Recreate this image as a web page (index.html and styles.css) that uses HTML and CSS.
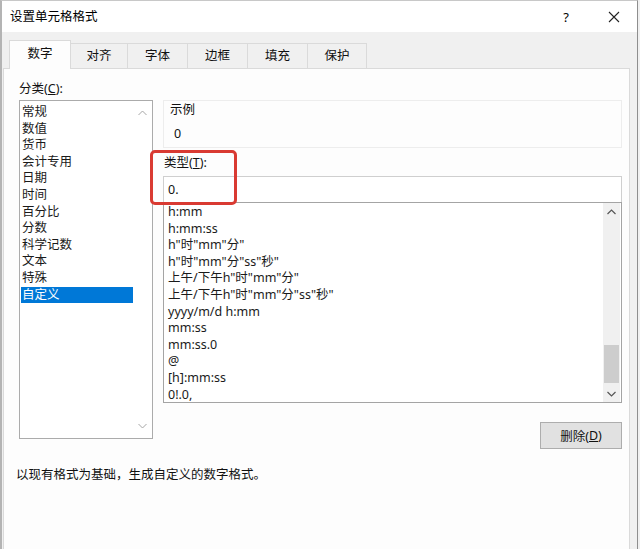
FILE: index.html
```html
<!DOCTYPE html>
<html lang="zh-CN">
<head>
<meta charset="utf-8">
<title>设置单元格格式</title>
<link rel="stylesheet" href="styles.css">
</head>
<body>
<div class="window">
  <div class="titlebar">
    <span class="title">设置单元格格式</span>
    <span class="tbtn help">?</span>
    <span class="tbtn close"><svg width="12" height="12" viewBox="0 0 12 12"><path d="M1 1 L11 11 M11 1 L1 11" stroke="#222" stroke-width="1.1" fill="none"/></svg></span>
  </div>
  <div class="tabs">
    <div class="tab active">数字</div>
    <div class="tab narrow">对齐</div>
    <div class="tab">字体</div>
    <div class="tab">边框</div>
    <div class="tab">填充</div>
    <div class="tab last">保护</div>
  </div>
  <div class="panel">
    <div class="label">分类(<u>C</u>):</div>
    <div class="main">
      <div class="catlist">
        <div class="cat-items">
          <div class="item">常规</div>
          <div class="item">数值</div>
          <div class="item">货币</div>
          <div class="item">会计专用</div>
          <div class="item">日期</div>
          <div class="item">时间</div>
          <div class="item">百分比</div>
          <div class="item">分数</div>
          <div class="item">科学记数</div>
          <div class="item">文本</div>
          <div class="item">特殊</div>
          <div class="item sel">自定义</div>
        </div>
        <div class="cat-scroll">
          <svg class="chev" width="9" height="6" viewBox="0 0 9 6"><path d="M0.5 5 L4.5 1 L8.5 5" stroke="#a6a6a6" stroke-width="1" fill="none"/></svg>
          <svg class="chev" width="9" height="6" viewBox="0 0 9 6"><path d="M0.5 1 L4.5 5 L8.5 1" stroke="#a6a6a6" stroke-width="1" fill="none"/></svg>
        </div>
      </div>
      <div class="right">
        <div class="sample">
          <div class="sample-title">示例</div>
          <div class="sample-value">0</div>
        </div>
        <div class="type-label">类型(<u>T</u>):</div>
        <div class="type-input">0.</div>
        <div class="fmt-list">
          <div class="fmt-items">
            <div>h:mm</div>
            <div>h:mm:ss</div>
            <div>h"时"mm"分"</div>
            <div>h"时"mm"分"ss"秒"</div>
            <div>上午/下午h"时"mm"分"</div>
            <div>上午/下午h"时"mm"分"ss"秒"</div>
            <div>yyyy/m/d h:mm</div>
            <div>mm:ss</div>
            <div>mm:ss.0</div>
            <div>@</div>
            <div>[h]:mm:ss</div>
            <div>0!.0,</div>
          </div>
          <div class="fmt-scroll">
            <div class="sbtn"><svg width="9" height="6" viewBox="0 0 9 6"><path d="M0.5 5 L4.5 1 L8.5 5" stroke="#555" stroke-width="1.2" fill="none"/></svg></div>
            <div class="track"><div class="thumb"></div></div>
            <div class="sbtn"><svg width="9" height="6" viewBox="0 0 9 6"><path d="M0.5 1 L4.5 5 L8.5 1" stroke="#555" stroke-width="1.2" fill="none"/></svg></div>
          </div>
        </div>
        <div class="actions">
          <div class="button">删除(<u>D</u>)</div>
        </div>
      </div>
    </div>
    <div class="desc">以现有格式为基础，生成自定义的数字格式。</div>
  </div>
</div>
<div class="highlight"></div>
</body>
</html>
```

FILE: styles.css
```css
* { box-sizing: border-box; margin: 0; padding: 0; }
html, body { width: 640px; height: 549px; overflow: hidden; }
body {
  position: relative;
  background: #f0f0f0;
  font-family: "Noto Sans", "Noto Sans CJK SC", sans-serif;
  font-size: 12.5px;
  color: #111;
}
u { text-decoration: underline; text-underline-offset: 1px; }

.window {
  display: flex;
  flex-direction: column;
  width: 638px;
  height: 549px;
  border-left: 2px solid #b4b4b4;
  border-right: 1px solid #8e8e8e;
  border-top: 1px solid #c8c8c8;
}

.titlebar {
  height: 31px;
  flex: none;
  background: #fff;
  display: flex;
  align-items: center;
  padding-left: 8px;
  color: #000;
}
.title { flex: 1; line-height: 16px; }
.tbtn {
  width: 46px;
  height: 31px;
  display: flex;
  align-items: center;
  justify-content: center;
}
.help { font-size: 13px; margin-right: 2px; }

.tabs {
  display: flex;
  align-items: flex-end;
  padding: 8px 0 0 7px;
  flex: none;
  position: relative;
  z-index: 1;
  margin-bottom: -1px;
}
.tab {
  width: 60px;
  height: 25px;
  border: 1px solid #dadada;
  border-left: none;
  border-bottom: none;
  background: #f0f0f0;
  display: flex;
  align-items: center;
  justify-content: center;
  line-height: 16px;
  margin-bottom: 1px;
}
.tab.narrow { width: 57px; }
.tab.last { width: 59px; }
.tab.active {
  width: 62px;
  height: 29px;
  background: #fdfdfd;
  border-left: 1px solid #dadada;
  margin-bottom: 0;
  padding-bottom: 2px;
}

.panel {
  flex: 1;
  margin: 0 7px 0 1px;
  background: #fdfdfd;
  border: 1px solid #dadada;
  border-bottom: none;
  padding: 12px 0 0 15px;
}
.label { line-height: 16px; }

.main {
  display: flex;
  gap: 10px;
  margin-top: 3px;
  align-items: flex-start;
}

.catlist {
  width: 134px;
  height: 339px;
  border: 1px solid #ababab;
  background: #fff;
  display: flex;
}
.cat-items {
  width: 113px;
  padding-top: 3px;
}
.item {
  height: 16.6px;
  line-height: 16.6px;
  padding-left: 2px;
  color: #1a1a1a;
}
.item.sel {
  background: #0078d7;
  color: #fff;
  margin-left: 1px;
  padding-left: 1px;
}
.cat-scroll {
  flex: 1;
  display: flex;
  flex-direction: column;
  justify-content: space-between;
  align-items: center;
  padding: 9px 0 9px;
}

.right {
  width: 459px;
  display: flex;
  flex-direction: column;
}
.sample {
  height: 48px;
  border: 1px solid #ededed;
  padding: 1px 0 0 6px;
}
.sample-title { line-height: 16px; }
.sample-value { line-height: 16px; margin-top: 8px; padding-left: 4px; }

.type-label { line-height: 16px; margin-top: 7px; padding-left: 1px; }
.type-input {
  margin-top: 5px;
  height: 26px;
  border: 1px solid #cfcfcf;
  border-bottom: none;
  background: #fff;
  padding-left: 4px;
  line-height: 25px;
}

.fmt-list {
  height: 201px;
  border: 1px solid #a4a4a4;
  background: #fff;
  display: flex;
}
.fmt-items {
  flex: 1;
  padding: 1px 0 0 4px;
  line-height: 16.6px;
  color: #1a1a1a;
  white-space: nowrap;
}
.fmt-scroll {
  width: 17px;
  margin-right: 1px;
  background: #f0f0f0;
  display: flex;
  flex-direction: column;
}
.sbtn {
  height: 17px;
  display: flex;
  align-items: center;
  justify-content: center;
}
.track {
  flex: 1;
  display: flex;
  flex-direction: column;
  justify-content: flex-end;
}
.thumb {
  height: 38px;
  margin: 0 1px 2px;
  background: #cdcdcd;
}

.actions {
  display: flex;
  justify-content: flex-end;
  margin-top: 19px;
}
.button {
  width: 82px;
  height: 27px;
  background: #e1e1e1;
  border: 1px solid #adadad;
  display: flex;
  align-items: center;
  justify-content: center;
  color: #111;
}

.desc {
  margin: 18px 0 0 -3px;
  line-height: 16px;
}

.highlight {
  position: absolute;
  left: 150px;
  top: 150px;
  width: 87px;
  height: 55px;
  border: 3px solid #d93a32;
  border-radius: 5px;
}
```
